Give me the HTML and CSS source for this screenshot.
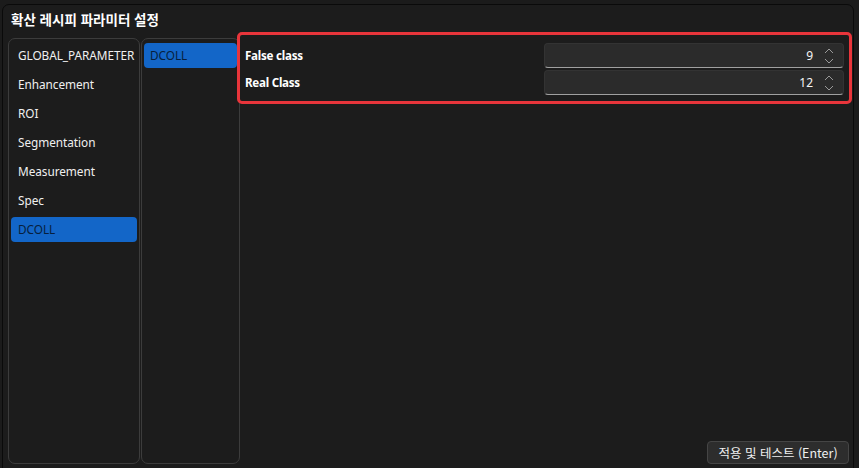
FILE: index.html
```html
<!DOCTYPE html>
<html lang="ko">
<head>
<meta charset="utf-8">
<link rel="stylesheet" href="styles.css">
</head>
<body>
<div class="frame">
  <div class="title">확산 레시피 파라미터 설정</div>
  <div class="content">
    <div class="panel list-main">
      <div class="item">GLOBAL_PARAMETER</div>
      <div class="item">Enhancement</div>
      <div class="item">ROI</div>
      <div class="item">Segmentation</div>
      <div class="item">Measurement</div>
      <div class="item">Spec</div>
      <div class="item selected">DCOLL</div>
    </div>
    <div class="panel list-sub">
      <div class="item selected">DCOLL</div>
    </div>
    <div class="params">
      <div class="highlight"></div>
      <div class="row">
        <span class="label">False class</span>
        <div class="spin"><span class="val">9</span><svg class="arrows" width="12" height="18" viewBox="0 0 12 18"><path d="M2 6 L6 2 L10 6 M2 12 L6 16 L10 12" fill="none" stroke="#9a9a9a" stroke-width="1"/></svg></div>
      </div>
      <div class="row">
        <span class="label">Real Class</span>
        <div class="spin"><span class="val">12</span><svg class="arrows" width="12" height="18" viewBox="0 0 12 18"><path d="M2 6 L6 2 L10 6 M2 12 L6 16 L10 12" fill="none" stroke="#9a9a9a" stroke-width="1"/></svg></div>
      </div>
      <div class="spacer"></div>
      <div class="actions"><button class="btn">적용 및 테스트 (Enter)</button></div>
    </div>
  </div>
</div>
</body>
</html>
```
FILE: styles.css
```css
html, body {
  margin: 0;
  padding: 0;
  background: #1b1b1b;
  width: 859px;
  height: 468px;
  overflow: hidden;
  font-family: "Noto Sans", "Noto Sans CJK KR", sans-serif;
  color: #ffffff;
}
.frame {
  margin: 4px 0 0 2px;
  width: 852px;
  height: 480px;
  border: 1px solid #0a0a0a;
  border-radius: 7px;
  background: #1c1c1c;
  box-sizing: border-box;
  padding: 0 0 0 5px;
}
.title {
  font-family: "Noto Sans CJK KR", sans-serif;
  font-weight: 700;
  font-size: 13.5px;
  height: 33px;
  line-height: 28px;
  padding-left: 3px;
}
.content {
  display: flex;
  gap: 1px;
  height: 426px;
}
.panel {
  border: 1px solid #3c3c3c;
  border-radius: 7px;
  box-sizing: border-box;
  padding: 4px 2px;
  display: flex;
  flex-direction: column;
  gap: 4px;
}
.list-main { width: 132px; }
.list-sub { width: 99px; }
.item {
  height: 25px;
  line-height: 25px;
  padding-left: 7px;
  font-size: 11.8px;
  letter-spacing: -0.05px;
  border-radius: 4px;
  color: #f0f0f0;
  white-space: nowrap;
}
.list-sub .item { padding-left: 6px; }
.item.selected {
  background: #1366c8;
  color: #071f3d;
}
.params {
  flex: 1;
  position: relative;
  display: flex;
  flex-direction: column;
  padding: 5px 9px 0 4px;
  gap: 2px;
}
.highlight {
  position: absolute;
  left: -4px;
  top: -6px;
  width: 615px;
  height: 72px;
  box-sizing: border-box;
  border: 3px solid #e8353b;
  border-radius: 5px;
  pointer-events: none;
}
.row {
  display: flex;
  align-items: center;
  justify-content: space-between;
  height: 25px;
}
.label {
  font-size: 11.6px;
  letter-spacing: -0.25px;
  font-weight: 700;
}
.spin {
  width: 300px;
  height: 25px;
  box-sizing: border-box;
  background: #2b2b2b;
  border: 1px solid #333333;
  border-bottom: 1px solid #a0a0a0;
  border-radius: 4px;
  display: flex;
  align-items: center;
  justify-content: flex-end;
  padding-right: 8px;
  gap: 10px;
}
.val { font-size: 12px; color: #f5f5f5; }
.arrows { display: block; }
.spacer { flex: 1; }
.actions {
  display: flex;
  justify-content: flex-end;
  align-items: flex-end;
  height: 26px;
}
.btn {
  font-family: "Noto Sans CJK KR", sans-serif;
  font-size: 12.5px;
  color: #f0f0f0;
  background: #2d2d2d;
  border: 1px solid #454545;
  border-radius: 4px;
  height: 23px;
  width: 142px;
  padding: 0;
  margin-right: -5px;
}
```
